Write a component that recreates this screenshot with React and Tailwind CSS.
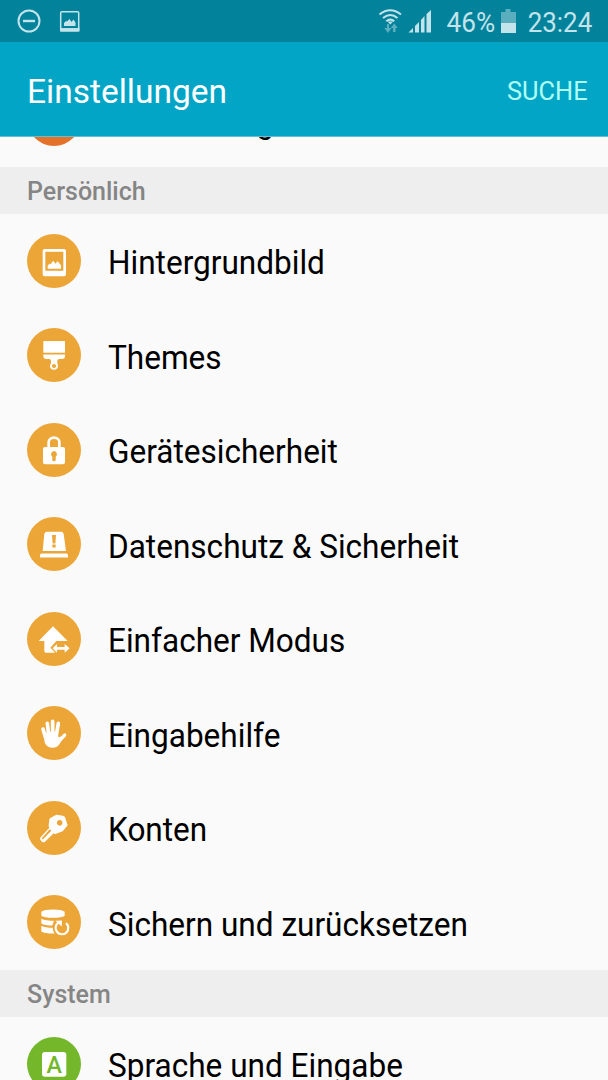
import React from 'react'


const Icon = ({ viewBox, children }) => (
    <svg viewBox={viewBox} className="h-[54px] w-[54px]" fill="white">
        {children}
    </svg>
);

const WallpaperIcon = () => (
    <Icon viewBox="21 26 162 162">
        <path fillRule="evenodd" d="M74 71h58q6 0 6 6v70q0 6-6 6H74q-6 0-6-6V77q0-6 6-6zM76 79v57h54V79z" />
        <path d="M83 130v-9l5-6 4 1 8-10 6 9 7-7 10 12v10z" />
    </Icon>
);

const BrushIcon = () => (
    <Icon viewBox="21 24.8 162 162">
        <path d="M70 64h65v35H70z" />
        <path fillRule="evenodd" d="M70 104h65v5q0 9-9 9h-8q-6 0-6 6v7q2 3 2 7a12 12 0 0 1-24 0q0-4 3-7v-7q0-6-6-6h-8q-9 0-9-9zM102 133a6 6 0 1 0 .1 0z" />
    </Icon>
);

const LockIcon = () => (
    <Icon viewBox="21 23 162 162">
        <path d="M86 98V80a16 13 0 0 1 32 0v18" fill="none" stroke="white" strokeWidth="8" />
        <path fillRule="evenodd" d="M75 95h54q6 0 6 6v40q0 6-6 6H75q-6 0-6-6v-40q0-6 6-6zM102 107a9.500 9.500 0 0 0-5 17v10q0 4 5 4t5-4v-10a9.500 9.500 0 0 0-5-17z" />
    </Icon>
);

const AlarmIcon = () => (
    <Icon viewBox="21 21.8 162 162">
        <path fillRule="evenodd" d="M81 66h42q7 0 8 7l7 51H68l5-51q1-7 8-7zM96 76l2 25h8l2-25zM97 104v9h10v-9z" />
        <path d="M65 131h74q5 0 5 5v7H60v-7q0-5 5-5z" />
    </Icon>
);

const HomeIcon = () => (
    <Icon viewBox="21 20 162 162">
        <path d="M99 63l44 44h-34L91 127l13 13v2H78q-5 0-5-5v-30H56z" />
        <path d="M98 129l13-13v9h23v-9l15 13-15 13v-9h-23v9z" />
    </Icon>
);

const HandIcon = () => (
    <Icon viewBox="21 21.8 162 162">
        <g fill="none" stroke="white" strokeLinecap="round" strokeWidth="11">
            <path d="M69 91l7 24" />
            <path d="M82 74l4 34" />
            <path d="M98 68v38" />
            <path d="M115 74l-6 36" />
            <path d="M134 109l-18 19" strokeWidth="10" />
        </g>
        <path d="M71 112L82 98h31l2 16q1 3 6-1l8 6-12 19q-6 9-19 9-17 0-24-16z" />
    </Icon>
);

const KeyIcon = () => (
    <Icon viewBox="21 23 162 162">
        <path fillRule="evenodd" d="M91 74l18-10 20 3q4 1 6 5l8 24-15 18-20 7q-5 2-7-1L75 145q-4 4-9 0l-4-4q-4-4 0-9l26-29q-3-4-2-8l2-16q0-3 3-5zM119 80a8.500 8.500 0 1 0 .1 0zM89 108l-23 26q-1 2 0 3 2 2 4 0l24-25z" />
    </Icon>
);

const BackupIcon = () => (
    <Icon viewBox="21 21.8 162 162">
        <path d="M64 72q9-7 35-7t35 7v12q-9 6-35 6t-35-6z" />
        <path d="M64 93q14 6 38 6l-5 14q-22 0-33-6z" />
        <path d="M64 114q12 6 34 6 0 10 6 17-27 1-40-6z" />
        <path d="M138 106a19 19 0 1 1-23-1" fill="none" stroke="white" strokeWidth="6.500" />
        <path d="M106 99l20-1-1 18z" />
    </Icon>
);

const LanguageIcon = () => (
    <Icon viewBox="81 231 162 162">
        <rect x="126" y="276" width="73" height="74" rx="9" />
        <text x="162.500" y="338" textAnchor="middle" fill="#74b72b" className="font-['Roboto'] text-[70px] font-medium">A</text>
    </Icon>
);

const personalItems = [
    { title: 'Hintergrundbild', icon: <WallpaperIcon /> },
    { title: 'Themes', icon: <BrushIcon /> },
    { title: 'Gerätesicherheit', icon: <LockIcon /> },
    { title: 'Datenschutz & Sicherheit', icon: <AlarmIcon /> },
    { title: 'Einfacher Modus', icon: <HomeIcon /> },
    { title: 'Eingabehilfe', icon: <HandIcon /> },
    { title: 'Konten', icon: <KeyIcon /> },
    { title: 'Sichern und zurücksetzen', icon: <BackupIcon /> },
];

const SettingsRow = ({ title, icon, color = 'bg-[#eca537]' }) => (
    <div className="flex h-[94.5px] shrink-0 items-center pl-[27px]">
        <div className={`h-[54px] w-[54px] shrink-0 rounded-full ${color}`}>
            {icon}
        </div>
        <span className="ml-[27px] origin-left scale-x-[0.956] pt-[5px] text-[33px] leading-[38px] whitespace-nowrap text-black">
            {title}
        </span>
    </div>
);

const SectionHeader = ({ title }) => (
    <h2 className="flex h-[47px] shrink-0 items-center bg-[#eeeeee] pt-[4px] pl-[27px] text-[25px] font-medium text-[#858585]">
        {title}
    </h2>
);

const StatusBar = () => (
    <div className="flex h-[42px] shrink-0 items-center justify-between bg-[#03829c] text-[#c2e4ea]">
        <svg width="90" height="42" fill="none" stroke="currentColor">
            <circle cx="29" cy="21" r="10.500" strokeWidth="2" />
            <path d="M23 21h12" strokeWidth="2.400" />
            <rect x="60.700" y="11.700" width="18" height="19" rx="1" strokeWidth="1.500" />
            <path d="M60 29.800h19.500" strokeWidth="3.500" />
            <path d="M64 26v-3l2-2 1 .5 2.500-2.500 2 3 2-2.500 2 3v3.500z" fill="currentColor" stroke="none" />
        </svg>
        <div className="flex items-center pr-[16px]">
            <svg width="56" height="42" viewBox="376 0 56 42" fill="none" stroke="currentColor">
                <path d="M379.500 14.500q10.700-8.500 21.500 0M383 18q7.300-6 14.500 0M386.300 21.300q4-3.300 8 0" strokeWidth="2" />
                <path d="M387.500 21.500L390.300 24.500l2.800-3z" fill="currentColor" stroke="none" />
                <path d="M387 24v4h-2.700l3.700 5 3.500-5H389v-4zM393 32v-4h-2.200l3.500-4.500 3.500 4.500H395.500v4z" fill="#5baebd" stroke="none" />
                <path d="M408.500 32.500l4.500-4.500v4.500zM415 32.500V26l4-4v10.500zM421 32.500V20l3.500-4v16.500zM426.500 32.500V14l4.500-4v22.500z" fill="currentColor" stroke="none" />
            </svg>
            <span className="ml-[13px] origin-right scale-x-[0.97] pt-[4px] text-[27px] leading-none">46%</span>
            <svg width="16" height="42" viewBox="500 0 16 42" className="ml-[5px]">
                <path d="M505.500 9h5v3h5.500v11h-15V12h4.500z" fill="#5baebd" />
                <path d="M501 23h15v10h-15z" fill="currentColor" />
            </svg>
            <span className="ml-[9px] origin-right scale-x-[0.96] pt-[4px] text-[27px] leading-none">23:24</span>
        </div>
    </div>
);

const App = () => {
    return (
        <div className="flex h-[1080px] w-[608px] flex-col overflow-hidden bg-[#fafafa] font-['Roboto',sans-serif]">
            <StatusBar />

            {/* TITLE BAR */}
            <header className="flex h-[95px] shrink-0 items-center justify-between border-b border-[#5fc0d3] bg-[#02a5c6] pt-[4px] pr-[20px] pl-[27px]">
                <h1 className="origin-left scale-x-[0.985] text-[34px] text-white">Einstellungen</h1>
                <button className="origin-right scale-x-[0.975] text-[26px] text-[#b0fff5]">SUCHE</button>
            </header>

            {/* LIST, scrolled */}
            <main className="min-h-0 flex-1 overflow-hidden">
                <div className="-mt-[65px] flex flex-col">
                    <SettingsRow title="Anwendungen" color="bg-[#e4722b]" />
                    <SectionHeader title="Persönlich" />
                    {personalItems.map((item) => (
                        <SettingsRow key={item.title} {...item} />
                    ))}
                    <SectionHeader title="System" />
                    <SettingsRow title="Sprache und Eingabe" icon={<LanguageIcon />} color="bg-[#74b72b]" />
                </div>
            </main>
        </div>
    );
};

export default App;
